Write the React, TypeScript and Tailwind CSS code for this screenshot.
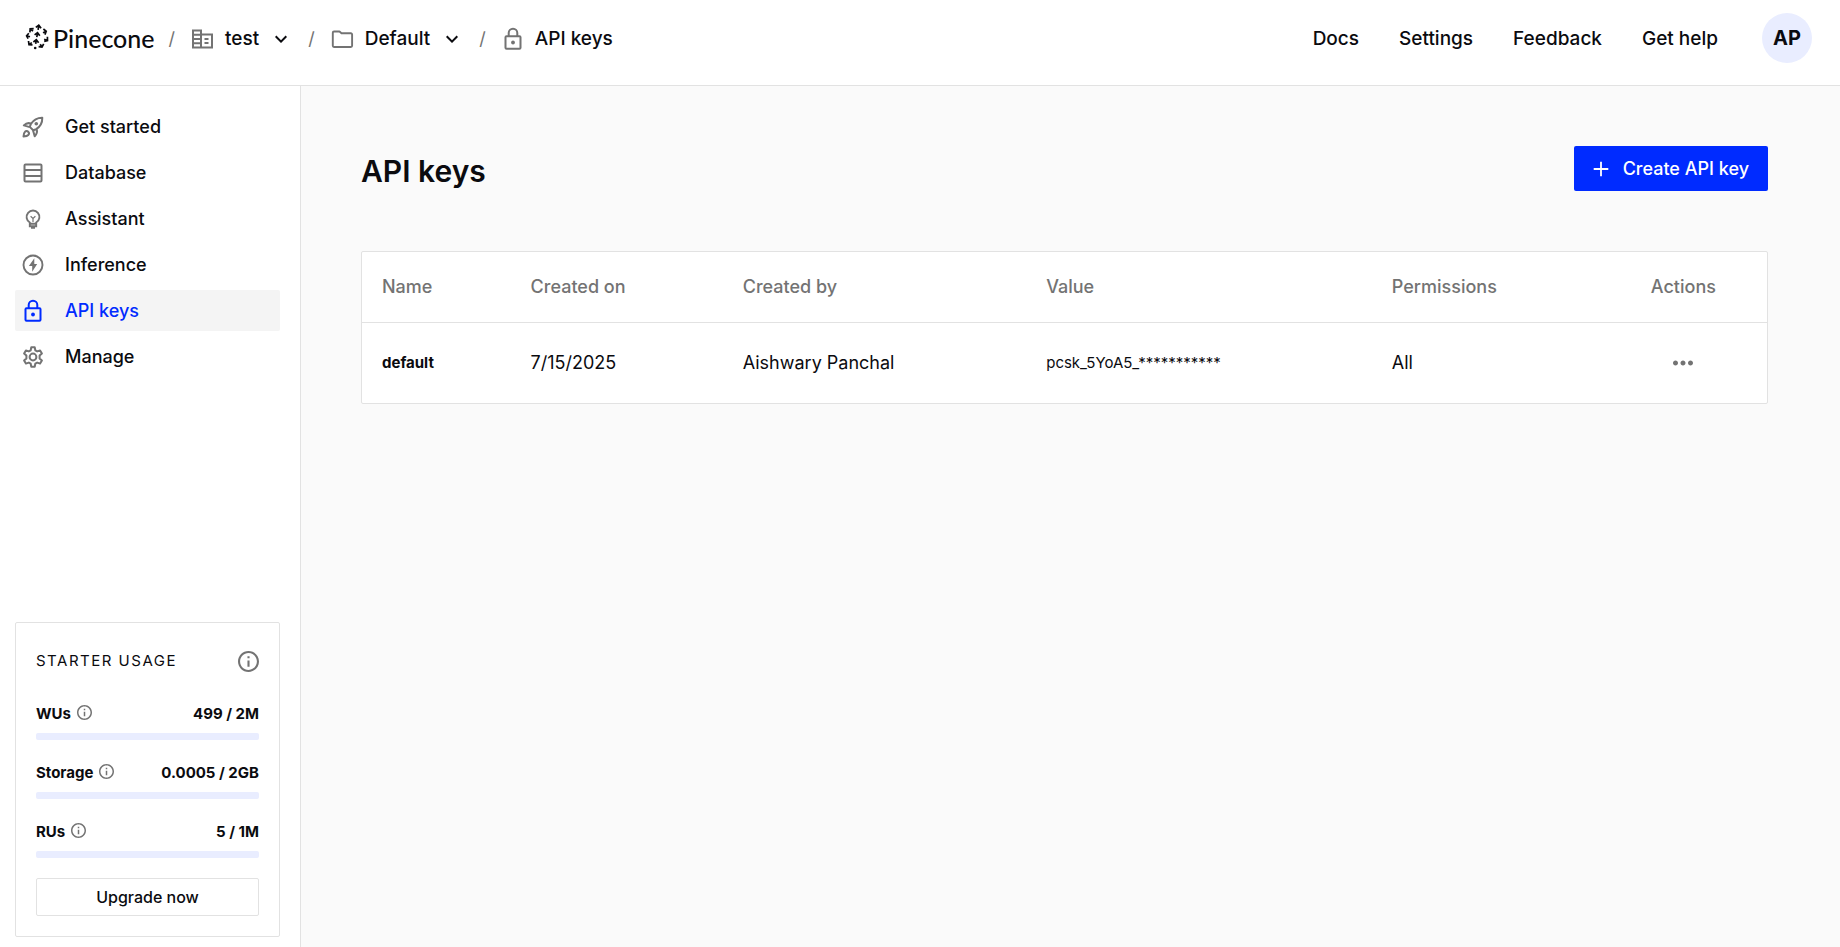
import type { ReactNode } from 'react';
import { MdKeyboardArrowDown, MdMoreHoriz } from 'react-icons/md';

interface NavItem {
  label: string;
  icon: ReactNode;
  active?: boolean;
}

interface UsageItem {
  label: string;
  value: string;
  percent: number;
}

interface ApiKey {
  name: string;
  createdOn: string;
  createdBy: string;
  value: string;
  permissions: string;
}

function PineconeMark() {
  return (
    <svg width="24" height="26" viewBox="0 0 24 26" fill="none" stroke="currentColor" strokeWidth="1.7">
      <path d="M13.8 1.2 13.1 5.8M10.8 3.4l3-2.2 2.3 3" />
      <path d="M12.5 8.8l-.7 4.4M9.6 10.9l2.9-2.2 2.3 3.1" />
      <path d="M11.3 15.8l-.6 4M8.4 18l2.9-2.2 2.3 3" />
      <path d="M8 7.2 5.4 5M4.9 8.4 5.2 4.9l3.5-.2M18 8.8l3-1.4M18.4 5l2.8 2.3-1.3 3.3" />
      <path d="M5 12.7l-3.2-.9M3.8 9.2l-2.2 2.6 1.5 2.8M19.2 15.2l3 1.3M22.4 12.8l.1 3.7-3.3.9" />
      <path d="M6.8 18.6l-2.4 1.8M3.5 17l.5 3.6 3.5.2M15.2 20.2l1.6 2.6M18.7 19.8l-1.7 3.2-3.4-.4" />
      <circle cx="10.2" cy="24" r="1.3" fill="currentColor" stroke="none" />
    </svg>
  );
}

function BuildingIcon() {
  return (
    <svg width="25" height="24" viewBox="0 0 25 24" fill="none" stroke="currentColor" strokeWidth="2">
      <path d="M3 3.5h8v17H3ZM11 7.5h11v13H11Z" />
      <path d="M3 7.7h8M3 12h8M3 16.3h8" />
      <path d="M14.5 12h4M14.5 16h4" />
    </svg>
  );
}

function FolderIcon() {
  return (
    <svg width="25" height="24" viewBox="0 0 25 24" fill="none" stroke="currentColor" strokeWidth="1.9" strokeLinejoin="round">
      <path d="M4 4.500h5.500l2 1.700h9.400a1.200 1.200 0 0 1 1.200 1.200v11.400a1.200 1.200 0 0 1-1.200 1.200H4a1.200 1.200 0 0 1-1.200-1.200V5.700A1.200 1.200 0 0 1 4 4.500Z" />
    </svg>
  );
}

function RocketIcon() {
  return (
    <svg width="24" height="24" viewBox="0 0 24 24" fill="none" stroke="currentColor" strokeWidth="2" strokeLinejoin="round">
      <path d="M21.3 2.7c-4.6-.1-8.6 1.9-11.4 6.2l-1.100 3 3.400 3.400 3-1.100c4.300-2.800 6.200-6.900 6.100-11.500Z" />
      <path d="M10 8.700C7.500 7.500 5 8.300 2.800 10.400l5.900 1.700M15.400 14c1.200 2.500.4 5-1.700 7.300l-1.700-6" />
      <path d="M2.500 21.500c.2-2.300.5-3.900 1.500-4.800.9-.9 2.300-.8 3.200.1.900.9 1 2.300.1 3.200-.9 1-2.500 1.300-4.800 1.500Z" />
      <circle cx="15.3" cy="8.7" r="1.8" fill="currentColor" stroke="none" />
    </svg>
  );
}

function DatabaseIcon() {
  return (
    <svg width="24" height="24" viewBox="0 0 24 24" fill="none" stroke="currentColor" strokeWidth="2">
      <rect x="3.5" y="3.5" width="17" height="17" rx="1" />
      <path d="M3.5 9h17M3.500 15h17" />
    </svg>
  );
}

function BulbIcon() {
  return (
    <svg width="24" height="24" viewBox="0 0 24 24" fill="none" stroke="currentColor" strokeWidth="1.9">
      <path d="M8.800 15.500a6.400 6.400 0 1 1 6.400 0v3.700H8.800Z" />
      <path d="M8.800 16.700h6.400M10 20.900h4" />
      <path d="M9.600 9.200 12 11.400l2.400-2.200M12 11.400v3.600" strokeWidth="1.2" />
    </svg>
  );
}

function BoltIcon() {
  return (
    <svg width="24" height="24" viewBox="0 0 24 24" fill="none" stroke="currentColor" strokeWidth="1.9">
      <circle cx="12" cy="12" r="9.5" />
      <path d="M13.300 5.200 7.900 13h3.300v5.800L16.200 11h-2.900Z" fill="currentColor" stroke="none" />
    </svg>
  );
}

function LockIcon() {
  return (
    <svg width="24" height="24" viewBox="0 0 24 24" fill="none" stroke="currentColor" strokeWidth="2">
      <rect x="4.500" y="9.300" width="15" height="12.500" rx="1" />
      <path d="M7.700 9.300V6a4.300 4.300 0 0 1 8.600 0v3.300" />
      <circle cx="12" cy="15.500" r="1.9" fill="currentColor" stroke="none" />
    </svg>
  );
}

function GearIcon() {
  return (
    <svg width="24" height="24" viewBox="0 0 24 24" fill="none" stroke="currentColor" strokeWidth="2" strokeLinejoin="round">
      <path d="M10.300 2.300h3.400l.6 3 1.900 1.100 2.900-1 1.800 3.100-2.300 2.100v2.800l2.300 2.100-1.800 3.100-2.900-1-1.900 1.100-.6 3h-3.400l-.6-3-1.900-1.100-2.900 1-1.800-3.100 2.300-2.100v-2.800L3.100 8.500l1.800-3.100 2.900 1 1.900-1.100Z" />
      <circle cx="12" cy="12" r="3.4" />
    </svg>
  );
}

function InfoIcon({ size }: { size: number }) {
  return (
    <svg width={size} height={size} viewBox="2 2 20 20" fill="currentColor" className="text-[#737373]">
      <path d="M11 7h2v2h-2zm0 4h2v6h-2zm1-9C6.480 2 2 6.480 2 12s4.480 10 10 10 10-4.480 10-10S17.520 2 12 2zm0 18c-4.410 0-8-3.590-8-8s3.590-8 8-8 8 3.590 8 8-3.590 8-8 8z" />
    </svg>
  );
}

function PlusIcon() {
  return (
    <svg width="16" height="16" viewBox="0 0 16 16" stroke="currentColor" strokeWidth="1.8">
      <path d="M8 .7v14.600M.7 8h14.600" />
    </svg>
  );
}

function Slash() {
  return <span className="text-lg font-normal text-[#737373]">/</span>;
}

const navItems: NavItem[] = [
  { label: 'Get started', icon: <RocketIcon /> },
  { label: 'Database', icon: <DatabaseIcon /> },
  { label: 'Assistant', icon: <BulbIcon /> },
  { label: 'Inference', icon: <BoltIcon /> },
  { label: 'API keys', icon: <LockIcon />, active: true },
  { label: 'Manage', icon: <GearIcon /> },
];

const topLinks = ['Docs', 'Settings', 'Feedback', 'Get help'];

const usage: UsageItem[] = [
  { label: 'WUs', value: '499 / 2M', percent: 0 },
  { label: 'Storage', value: '0.0005 / 2GB', percent: 0 },
  { label: 'RUs', value: '5 / 1M', percent: 0 },
];

const apiKeys: ApiKey[] = [
  {
    name: 'default',
    createdOn: '7/15/2025',
    createdBy: 'Aishwary Panchal',
    value: 'pcsk_5YoA5_***********',
    permissions: 'All',
  },
];

function Header() {
  return (
    <header className="flex items-start justify-between border-b border-[#e2e2e2] pt-[13px] pr-7 pb-5 pl-[25px]">
      <nav aria-label="Breadcrumb" className="flex h-[52px] items-center text-[19px] font-medium">
        <a href="#" className="flex items-center gap-1">
          <span className="pb-1"><PineconeMark /></span>
          <span className="font-[Lato,sans-serif] text-[25px] font-medium">Pinecone</span>
        </a>
        <div className="ml-[14px] flex items-center gap-[15px]">
          <Slash />
          <button className="flex items-center gap-[10px]">
            <span className="text-[#737373]"><BuildingIcon /></span>
            test
            <MdKeyboardArrowDown size={24} />
          </button>
          <Slash />
          <button className="flex items-center gap-[10px]">
            <span className="text-[#737373]"><FolderIcon /></span>
            Default
            <MdKeyboardArrowDown size={24} />
          </button>
          <Slash />
          <a href="#" className="flex items-center gap-[10px]">
            <span className="text-[#737373]"><LockIcon /></span>
            API keys
          </a>
        </div>
      </nav>

      <div className="flex items-start">
        <nav className="flex h-[52px] items-center gap-10 text-[19px] font-medium">
          {topLinks.map((link) => (
            <a key={link} href="#">{link}</a>
          ))}
        </nav>
        <button className="ml-11 size-[50px] rounded-full bg-[#e9edff] text-xl font-bold">AP</button>
      </div>
    </header>
  );
}

function UsageCard() {
  return (
    <section className="rounded-xs border border-[#e2e2e2] p-5">
      <div className="mb-[22px] flex h-9 items-center justify-between">
        <h2 className="text-[15px] tracking-widest">STARTER USAGE</h2>
        <InfoIcon size={21} />
      </div>
      <div className="flex flex-col gap-5">
        {usage.map((item) => (
          <div key={item.label}>
            <div className="flex h-[26px] items-center justify-between text-[15px] font-bold">
              <span className="flex items-center gap-1.5">
                {item.label}
                <span className="pb-1"><InfoIcon size={15} /></span>
              </span>
              <span>{item.value}</span>
            </div>
            <div className="mt-1.5 h-[7px] rounded-xs bg-[#e9edff]">
              <div className="h-full bg-[#002bff]" style={{ width: `${item.percent}%` }} />
            </div>
          </div>
        ))}
      </div>
      <button className="mt-5 h-[38px] w-full rounded-xs border border-[#e2e2e2] text-base font-medium">
        Upgrade now
      </button>
    </section>
  );
}

function Sidebar() {
  return (
    <aside className="flex w-[301px] shrink-0 flex-col justify-between border-r border-[#e2e2e2] pt-5 pr-5 pb-[10px] pl-[15px]">
      <nav className="flex flex-col gap-[5px]">
        {navItems.map((item) => (
          <a
            key={item.label}
            href="#"
            className={
              item.active
                ? 'flex h-[41px] items-center gap-5 rounded-xs bg-[#f4f4f4] px-1.5 text-lg font-medium text-[#002bff]'
                : 'flex h-[41px] items-center gap-5 rounded-xs px-1.5 text-lg font-medium'
            }
          >
            <span className={item.active ? '' : 'text-[#737373]'}>{item.icon}</span>
            {item.label}
          </a>
        ))}
      </nav>
      <UsageCard />
    </aside>
  );
}

function ApiKeysTable() {
  return (
    <div className="mt-15 rounded-xs border border-[#e2e2e2] bg-white">
      <table className="w-full table-fixed text-left text-lg">
        <colgroup>
          <col className="w-[12%]" />
          <col className="w-[15.1%]" />
          <col className="w-[21.6%]" />
          <col className="w-[24.6%]" />
          <col className="w-[14.8%]" />
          <col className="w-[11.9%]" />
        </colgroup>
        <thead>
          <tr className="h-[70px] border-b border-[#e2e2e2] text-[#737373]">
            <th className="pl-5 font-medium">Name</th>
            <th className="font-medium">Created on</th>
            <th className="font-medium">Created by</th>
            <th className="font-medium">Value</th>
            <th className="font-medium">Permissions</th>
            <th className="text-center font-medium">Actions</th>
          </tr>
        </thead>
        <tbody>
          {apiKeys.map((key) => (
            <tr key={key.name} className="h-[81px]">
              <td className="pl-5 text-[15px] font-bold">{key.name}</td>
              <td>{key.createdOn}</td>
              <td>{key.createdBy}</td>
              <td className="text-[15px]">{key.value}</td>
              <td>{key.permissions}</td>
              <td className="text-center">
                <button aria-label="Key actions" className="align-middle text-[#737373]">
                  <MdMoreHoriz size={30} />
                </button>
              </td>
            </tr>
          ))}
        </tbody>
      </table>
    </div>
  );
}

function App() {
  return (
    <div className="flex min-h-screen flex-col bg-white font-[Inter,sans-serif] text-[#0b0b0f]">
      <Header />
      <div className="flex grow">
        <Sidebar />
        <main className="grow bg-[#fafafa] pt-15 pr-18 pl-15">
          <div className="flex items-start justify-between">
            <h1 className="pt-[5px] text-3xl leading-10 font-semibold">API keys</h1>
            <button className="flex h-[45px] items-center gap-[14px] rounded-xs bg-[#002bff] px-[19px] text-lg font-medium text-white">
              <PlusIcon />
              Create API key
            </button>
          </div>
          <ApiKeysTable />
        </main>
      </div>
    </div>
  );
}

export default App;
